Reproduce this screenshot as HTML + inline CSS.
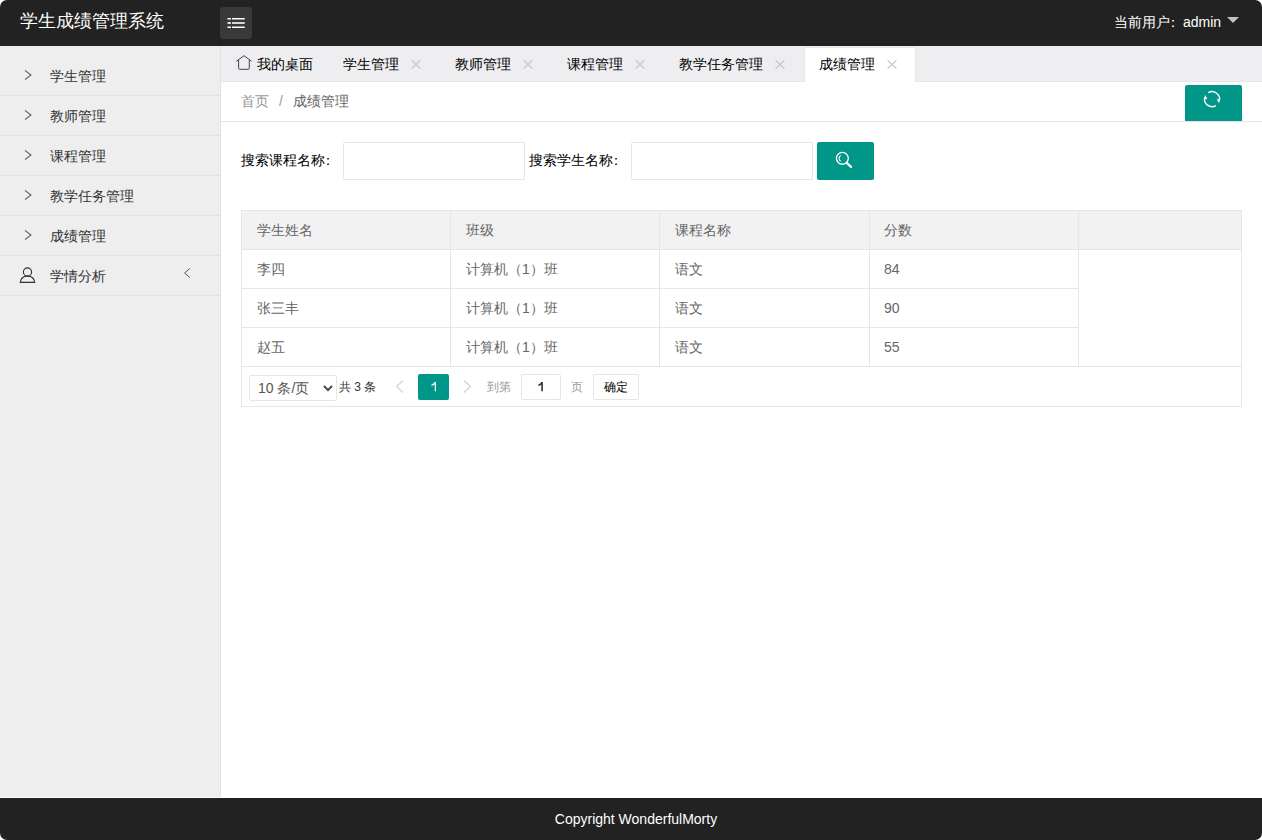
<!DOCTYPE html>
<html><head><meta charset="utf-8">
<style>
*{margin:0;padding:0;box-sizing:border-box;}
html,body{width:1262px;height:840px;overflow:hidden;background:#fff;}
body{font-family:"Liberation Sans",sans-serif;font-size:14px;color:#333;position:relative;}
.abs{position:absolute;}
.wrap{position:absolute;left:0;top:0;width:1262px;height:840px;border-radius:7px;overflow:hidden;background:#fff;}
.header{position:absolute;left:0;top:0;width:1262px;height:46px;background:#222;}
.logo{position:absolute;left:20px;top:9px;font-size:18px;line-height:24px;color:#fff;white-space:nowrap;}
.menubtn{position:absolute;left:220px;top:7px;width:32px;height:32px;border-radius:3px;background:#393939;}
.user{position:absolute;left:1114px;top:12px;font-size:14px;line-height:20px;color:#fff;white-space:nowrap;}
.caret{position:absolute;left:1227px;top:17px;width:0;height:0;border-left:6px solid transparent;border-right:6px solid transparent;border-top:6px solid #c2c2c2;}
.side{position:absolute;left:0;top:46px;width:221px;height:751px;background:#eee;border-right:1px solid #e2e2e2;}
.side .item{position:absolute;left:0;width:220px;height:41px;border-bottom:1px solid #e2e2e2;}
.side .item .t{position:absolute;left:50px;top:11px;line-height:20px;font-size:14px;color:#333;white-space:nowrap;}
.chev{position:absolute;left:24px;width:8px;height:10px;}
.tabs{position:absolute;left:221px;top:46px;width:1041px;height:36px;background:#eeeef0;border-bottom:1px solid #e6e6e6;}
.tab{position:absolute;top:9px;line-height:20px;font-size:14px;color:#000;white-space:nowrap;}
.x{position:absolute;width:10px;height:10px;}
.tab-active{position:absolute;left:804px;top:47px;width:112px;height:35px;background:#fff;border:1px solid #e6e6e6;border-bottom:none;}
.crumb{position:absolute;left:241px;top:91px;line-height:20px;font-size:14px;white-space:nowrap;}
.crumbline{position:absolute;left:221px;top:121px;width:1041px;height:1px;background:#e6e6e6;}
.refresh{position:absolute;left:1185px;top:85px;width:57px;height:36px;background:#009688;border-radius:2px 2px 0 0;}
.label{position:absolute;top:150px;line-height:20px;font-size:14px;color:#000;white-space:nowrap;}
.input{position:absolute;top:142px;width:182px;height:38px;border:1px solid #e6e6e6;border-radius:2px;background:#fff;}
.sbtn{position:absolute;left:817px;top:142px;width:57px;height:38px;background:#009688;border-radius:2px;}
.table{position:absolute;left:241px;top:210px;width:1001px;height:197px;border:1px solid #e6e6e6;}
.hline{position:absolute;height:1px;background:#e6e6e6;}
.vline{position:absolute;width:1px;background:#e6e6e6;}
.cell{position:absolute;line-height:20px;font-size:14px;color:#666;white-space:nowrap;}
.footer{position:absolute;left:0;top:798px;width:1262px;height:42px;background:#222;color:#fff;text-align:center;font-size:14px;line-height:42px;padding-left:10px;}
</style></head>
<body>
<div class="wrap">
  <div class="header">
    <div class="logo">学生成绩管理系统</div>
    <div class="menubtn">
      <svg class="abs" style="left:7px;top:11px" width="18" height="10" viewBox="0 0 18 10">
        <g fill="#fff">
          <rect x="0.5" y="0" width="3.5" height="1.5"/><rect x="5" y="0" width="12.7" height="1.5"/>
          <rect x="0.5" y="4.2" width="3.5" height="1.6"/><rect x="5" y="4.2" width="12.7" height="1.6"/>
          <rect x="0.5" y="8.5" width="3.5" height="1.5"/><rect x="5" y="8.5" width="12.7" height="1.5"/>
        </g>
      </svg>
    </div>
    <div class="user">当前用户<span style="position:relative;left:-4px">：</span><span style="position:relative;left:-1px">admin</span></div>
    <div class="caret"></div>
  </div>

  <div class="side">
    <div class="item" style="top:9px"><svg class="chev" style="top:15px" viewBox="0 0 8 10"><path d="M1 0.5 L7 5 L1 9.5" fill="none" stroke="#666" stroke-width="1.1"/></svg><span class="t">学生管理</span></div>
    <div class="item" style="top:49px"><svg class="chev" style="top:15px" viewBox="0 0 8 10"><path d="M1 0.5 L7 5 L1 9.5" fill="none" stroke="#666" stroke-width="1.1"/></svg><span class="t">教师管理</span></div>
    <div class="item" style="top:89px"><svg class="chev" style="top:15px" viewBox="0 0 8 10"><path d="M1 0.5 L7 5 L1 9.5" fill="none" stroke="#666" stroke-width="1.1"/></svg><span class="t">课程管理</span></div>
    <div class="item" style="top:129px"><svg class="chev" style="top:15px" viewBox="0 0 8 10"><path d="M1 0.5 L7 5 L1 9.5" fill="none" stroke="#666" stroke-width="1.1"/></svg><span class="t">教学任务管理</span></div>
    <div class="item" style="top:169px"><svg class="chev" style="top:15px" viewBox="0 0 8 10"><path d="M1 0.5 L7 5 L1 9.5" fill="none" stroke="#666" stroke-width="1.1"/></svg><span class="t">成绩管理</span></div>
    <div class="item" style="top:209px">
      <svg class="abs" style="left:19px;top:12px" width="18" height="16" viewBox="0 0 18 16"><g fill="none" stroke="#333" stroke-width="1.15"><circle cx="8.5" cy="5" r="4.1"/><path d="M1.3 15.4 C1.8 10.8 5 9.1 8.5 9.1 C12 9.1 15.2 10.8 15.7 15.4 Z"/></g></svg>
      <span class="t">学情分析</span>
      <svg class="abs" style="left:184px;top:13px" width="7" height="10" viewBox="0 0 7 10"><path d="M5.8 0.5 L0.6 5 L5.8 9.5" fill="none" stroke="#555" stroke-width="1"/></svg>
    </div>
  </div>

  <div class="tabs"></div>
  <div class="tab-active"></div>
  <svg class="abs" style="left:236px;top:55px" width="17" height="16" viewBox="0 0 17 16"><path d="M0.3 6.3 L7.95 0.7 L15.6 6.3 M2.6 5.0 V13.4 Q2.6 14.3 3.5 14.3 H12.4 Q13.3 14.3 13.3 13.4 V5.0" fill="none" stroke="#444" stroke-width="1"/></svg>
  <div class="tab" style="left:257px;top:54px">我的桌面</div>
  <div class="tab" style="left:343px;top:54px">学生管理</div>
  <div class="tab" style="left:455px;top:54px">教师管理</div>
  <div class="tab" style="left:567px;top:54px">课程管理</div>
  <div class="tab" style="left:679px;top:54px">教学任务管理</div>
  <div class="tab" style="left:819px;top:54px">成绩管理</div>
  <svg class="x" style="left:411px;top:60px;height:9px" viewBox="0 0 10 9"><path d="M0.6 0.4 L9.4 8.6 M9.4 0.4 L0.6 8.6" stroke="#c4c4c4" stroke-width="1.2"/></svg>
  <svg class="x" style="left:523px;top:60px;height:9px" viewBox="0 0 10 9"><path d="M0.6 0.4 L9.4 8.6 M9.4 0.4 L0.6 8.6" stroke="#c4c4c4" stroke-width="1.2"/></svg>
  <svg class="x" style="left:635px;top:60px;height:9px" viewBox="0 0 10 9"><path d="M0.6 0.4 L9.4 8.6 M9.4 0.4 L0.6 8.6" stroke="#c4c4c4" stroke-width="1.2"/></svg>
  <svg class="x" style="left:775px;top:60px;height:9px" viewBox="0 0 10 9"><path d="M0.6 0.4 L9.4 8.6 M9.4 0.4 L0.6 8.6" stroke="#c4c4c4" stroke-width="1.2"/></svg>
  <svg class="x" style="left:887px;top:60px;height:9px" viewBox="0 0 10 9"><path d="M0.6 0.4 L9.4 8.6 M9.4 0.4 L0.6 8.6" stroke="#c4c4c4" stroke-width="1.2"/></svg>

  <div class="crumb"><span style="color:#999">首页</span><span style="color:#999;margin:0 10px">/</span><span style="color:#666">成绩管理</span></div>
  <div class="crumbline"></div>
  <div class="refresh"></div>
  <svg class="abs" style="left:1200px;top:88px" width="24" height="22" viewBox="0 0 24 22"><g fill="none" stroke="#fff" stroke-width="1.35"><path d="M8.19 4.72 A7.5 7.5 0 0 1 19.29 13.09"/><path d="M15.91 17.58 A7.5 7.5 0 0 1 4.81 9.21"/></g><path d="M20.3 10.6 L16.8 11.6 L19.0 15.2 Z M3.8 11.7 L7.3 10.7 L5.1 7.1 Z" fill="#fff"/></svg>

  <div class="label" style="left:241px">搜索课程名称<span style="position:relative;left:-4px">：</span></div>
  <div class="input" style="left:343px"></div>
  <div class="label" style="left:529px">搜索学生名称<span style="position:relative;left:-4px">：</span></div>
  <div class="input" style="left:631px"></div>
  <div class="sbtn"></div>
  <svg class="abs" style="left:835px;top:151px" width="18" height="18" viewBox="0 0 18 18"><g fill="none" stroke="#fff"><circle cx="7.35" cy="7.3" r="5.95" stroke-width="1.3"/><path d="M11.6 11.7 L16.0 15.9" stroke-width="2.2" stroke-linecap="round"/><path d="M5.7 4.44 A3.3 3.3 0 0 0 5.7 10.16" stroke-width="1.1"/></g></svg>

  <div class="table"></div>
  <div class="abs" style="left:242px;top:211px;width:999px;height:38px;background:#f2f2f2"></div>
  <div class="hline" style="left:242px;top:249px;width:999px"></div>
  <div class="hline" style="left:242px;top:288px;width:836px"></div>
  <div class="hline" style="left:242px;top:327px;width:836px"></div>
  <div class="hline" style="left:242px;top:366px;width:999px"></div>
  <div class="vline" style="left:450px;top:211px;height:155px"></div>
  <div class="vline" style="left:659px;top:211px;height:155px"></div>
  <div class="vline" style="left:869px;top:211px;height:155px"></div>
  <div class="vline" style="left:1078px;top:211px;height:155px"></div>

  <div class="cell" style="left:257px;top:220px">学生姓名</div>
  <div class="cell" style="left:466px;top:220px">班级</div>
  <div class="cell" style="left:675px;top:220px">课程名称</div>
  <div class="cell" style="left:884px;top:220px">分数</div>

  <div class="cell" style="left:257px;top:259px">李四</div>
  <div class="cell" style="left:466px;top:259px">计算机（1）班</div>
  <div class="cell" style="left:675px;top:259px">语文</div>
  <div class="cell" style="left:884px;top:259px">84</div>
  <div class="cell" style="left:257px;top:298px">张三丰</div>
  <div class="cell" style="left:466px;top:298px">计算机（1）班</div>
  <div class="cell" style="left:675px;top:298px">语文</div>
  <div class="cell" style="left:884px;top:298px">90</div>
  <div class="cell" style="left:257px;top:337px">赵五</div>
  <div class="cell" style="left:466px;top:337px">计算机（1）班</div>
  <div class="cell" style="left:675px;top:337px">语文</div>
  <div class="cell" style="left:884px;top:337px">55</div>

  <!-- pager -->
  <div class="abs" style="left:249px;top:375px;width:88px;height:26px;border:1px solid #e6e6e6;border-radius:2px;background:#fff"></div>
  <div class="abs" style="left:258px;top:378px;font-size:14px;line-height:20px;color:#555;white-space:nowrap">10 条/页</div>
  <svg class="abs" style="left:323px;top:385px" width="10" height="7" viewBox="0 0 10 7"><path d="M1 1 L5 5.2 L9 1" fill="none" stroke="#444" stroke-width="1.9"/></svg>
  <div class="abs" style="left:339px;top:377px;font-size:12px;line-height:20px;color:#333;white-space:nowrap">共 3 条</div>
  <svg class="abs" style="left:395px;top:380px" width="9" height="13" viewBox="0 0 9 13"><path d="M8 0.5 L1.5 6.5 L8 12.5" fill="none" stroke="#d2d2d2" stroke-width="1.2"/></svg>
  <div class="abs" style="left:418px;top:374px;width:31px;height:26px;background:#009688;border-radius:2px;"></div>
  <svg class="abs" style="left:431px;top:381.7px" width="6" height="10" viewBox="0 0 6 10"><path d="M3.7 0 H5.0 V9.3 H3.7 V2.2 C3.0 2.9 2.0 3.4 0.4 3.9 V2.6 C1.8 2.1 3.0 1.2 3.7 0 Z" fill="#fff"/></svg>
  <svg class="abs" style="left:463px;top:380px" width="9" height="13" viewBox="0 0 9 13"><path d="M1 0.5 L7.5 6.5 L1 12.5" fill="none" stroke="#d2d2d2" stroke-width="1.2"/></svg>
  <div class="abs" style="left:487px;top:377px;font-size:12px;line-height:20px;color:#999;white-space:nowrap">到第</div>
  <div class="abs" style="left:521px;top:374px;width:40px;height:26px;border:1px solid #e6e6e6;border-radius:2px;background:#fff;"></div>
  <svg class="abs" style="left:538.3px;top:381.6px" width="6" height="10" viewBox="0 0 6 10"><path d="M3.3 0 H4.9 V9.3 H3.3 V2.7 C2.6 3.2 1.6 3.6 0.4 3.9 V2.5 C1.6 2.1 2.7 1.2 3.3 0 Z" fill="#333"/></svg>
  <div class="abs" style="left:571px;top:377px;font-size:12px;line-height:20px;color:#999;white-space:nowrap">页</div>
  <div class="abs" style="left:593px;top:374px;width:46px;height:26px;border:1px solid #e6e6e6;border-radius:2px;background:#fff;font-size:12px;line-height:24px;text-align:center;color:#000">确定</div>

  <div class="footer">Copyright WonderfulMorty</div>
</div>
</body></html>
